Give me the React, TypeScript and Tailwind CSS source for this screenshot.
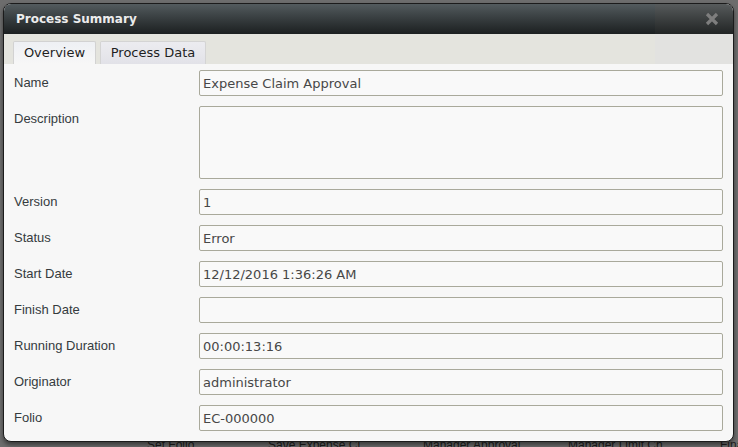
import React from "react";

const rows: { label: string; value: string; tall?: boolean }[] = [
  { label: "Name", value: "Expense Claim Approval" },
  { label: "Description", value: "", tall: true },
  { label: "Version", value: "1" },
  { label: "Status", value: "Error" },
  { label: "Start Date", value: "12/12/2016 1:36:26 AM" },
  { label: "Finish Date", value: "" },
  { label: "Running Duration", value: "00:00:13:16" },
  { label: "Originator", value: "administrator" },
  { label: "Folio", value: "EC-000000" },
];

export default function App() {
  return (
    <div
      className="relative w-[738px] h-[447px] overflow-hidden bg-[#6d6d6d]"
      style={{ fontFamily: '"Liberation Sans", Arial, sans-serif' }}
    >
      {/* underlying page labels */}
      <div className="absolute left-0 top-[436px] w-full h-[20px] text-[12px] text-[#1e1e1e]">
        <span className="absolute left-[147px]">Set Folio</span>
        <span className="absolute left-[268px]">Save Expense Cl...</span>
        <span className="absolute left-[423px]">Manager Approval</span>
        <span className="absolute left-[568px]">Manager Limit Ch...</span>
        <span className="absolute left-[720px]">Fina</span>
      </div>

      {/* dialog */}
      <div className="absolute left-[3px] top-[3px] w-[731px] h-[439px] rounded-[8px] border border-[#1b1b1b] bg-[#f7f7f7] overflow-hidden shadow-[0_3px_4px_rgba(0,0,0,0.45)] flex flex-col">
        {/* title bar */}
        <div className="flex h-[30px] shrink-0">
          <div
            className="flex-1 flex items-center pl-[12px] bg-gradient-to-b from-[#535b5e] to-[#1c2021] text-[#ececec] font-bold text-[12px]"
            style={{ fontFamily: '"DejaVu Sans", Verdana, sans-serif' }}
          >
            Process Summary
          </div>
          <div className="w-[78px] flex items-center justify-end pr-[14px] bg-gradient-to-b from-[#575b5c] to-[#222525]">
            <svg width="14" height="14" viewBox="0 0 14 14">
              <path d="M2 2 L12 12 M12 2 L2 12" stroke="#7e7e7e" strokeWidth="3.2" strokeLinecap="butt" />
            </svg>
          </div>
        </div>

        {/* tab strip */}
        <div
          className="flex h-[30px] shrink-0 bg-[#e4e4de] text-[13px] text-[#1f1f1f]"
          style={{ fontFamily: '"DejaVu Sans", Verdana, sans-serif' }}
        >
          <div className="flex-1 flex items-end pl-[9px] gap-[4px]">
            <div className="w-[83px] h-[23px] flex items-center justify-center rounded-t-[2px] border border-b-0 border-[#d2d2d2] bg-gradient-to-b from-[#eef0f4] to-[#f7f7f7]">
              Overview
            </div>
            <div className="w-[106px] h-[23px] flex items-center justify-center rounded-t-[2px] border border-b-0 border-[#d4d4d4] bg-gradient-to-b from-[#ececf0] to-[#e2e2e8]">
              Process Data
            </div>
          </div>
          <div className="w-[78px] bg-[#e2e2e0]" />
        </div>

        {/* form */}
        <div className="flex flex-col gap-[10px] pt-[6px] pl-[10px] pr-[10px]">
          {rows.map((r) => (
            <div key={r.label} className="flex">
              <div className="w-[185px] shrink-0 pt-[5px] text-[13px] leading-[16px] text-[#353b3e]">
                {r.label}
              </div>
              <div
                className={`w-[524px] ${r.tall ? "h-[73px]" : "h-[26px]"} rounded-[2px] border border-[#a9a99b] bg-[#f9f9f9] pl-[3px] text-[13px] text-[#474747] ${r.tall ? "pt-[2px]" : "flex items-center pt-[2px]"}`}
                style={{ fontFamily: '"DejaVu Sans", Verdana, sans-serif' }}
              >
                {r.value}
              </div>
            </div>
          ))}
        </div>
      </div>
    </div>
  );
}
